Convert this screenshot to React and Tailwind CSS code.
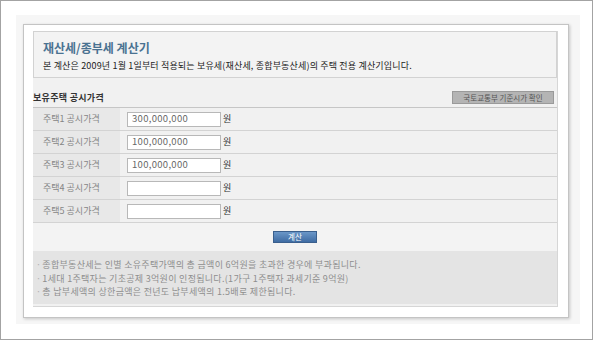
import React from 'react';

const font = { fontFamily: '"Noto Sans CJK KR", "Noto Sans", sans-serif' };

const rows = [
    { label: '주택1 공시가격', value: '300,000,000' },
    { label: '주택2 공시가격', value: '100,000,000' },
    { label: '주택3 공시가격', value: '100,000,000' },
    { label: '주택4 공시가격', value: '' },
    { label: '주택5 공시가격', value: '' },
];

const notes = [
    '종합부동산세는 인별 소유주택가액의 총 금액이 6억원을 초과한 경우에 부과됩니다.',
    '1세대 1주택자는 기초공제 3억원이 인정됩니다.(1가구 1주택자 과세기준 9억원)',
    '총 납부세액의 상한금액은 전년도 납부세액의 1.5배로 제한됩니다.',
];

function PriceRow({ label, value }) {
    return (
        <div className="flex h-[23px] border-b border-[#d3d3d3]">
            <div className="w-[87px] bg-[#e8e8e8] pl-[10px] flex items-center text-[9px] text-[#858585]">
                {label}
            </div>
            <div className="flex-1 flex items-center pl-[7px]">
                <div className="w-[94px] h-[15px] border border-[#b8b8b8] bg-white pl-[4px] flex items-center text-[9.5px] tracking-[0.3px] text-[#666] leading-none">
                    {value}
                </div>
                <span className="ml-[2px] text-[9px] text-[#333]">원</span>
            </div>
        </div>
    );
}

export default function App() {
    return (
        <div style={font} className="w-[593px] h-[340px] border border-[#a3a3a3] bg-white pl-[15px] pt-[14px]">
            <div className="w-[564px] h-[309px] bg-[#f6f6f6] pl-[7px] pt-[9px]">
                <div className="w-[546px] h-[294px] border border-[#c4c4c4] bg-white shadow-[1px_1px_3px_rgba(0,0,0,0.2)] pl-[9px] pt-[6px]">
                    <div className="w-[525px] h-[276px] bg-[#f1f1f1] border-r border-b border-[#d6d6d6] flex flex-col">
                        {/* header */}
                        <div className="h-[47px] border border-[#d2d2d2] bg-[#f3f3f3] pl-[9px] pt-[8px]">
                            <div className="text-[12px] leading-[16px] font-bold text-[#4a7291]">재산세/종부세 계산기</div>
                            <div className="mt-[3px] text-[9px] leading-[14px] tracking-[0.17px] text-[#222]">
                                본 계산은 2009년 1월 1일부터 적용되는 보유세(재산세, 종합부동산세)의 주택 전용 계산기입니다.
                            </div>
                        </div>

                        {/* section heading */}
                        <div className="h-[29px] pt-[10px] flex items-center justify-between pr-[3px]">
                            <span className="text-[9px] font-bold tracking-[0.3px] text-[#333]">보유주택 공시가격</span>
                            <button className="h-[13px] w-[102px] bg-[#b4b4b4] border border-[#9a9a9a] text-[7.5px] leading-none text-[#555] flex items-center justify-center">
                                국토교통부 기준시가 확인
                            </button>
                        </div>

                        {/* table */}
                        <div className="border-t border-[#c6c6c6]">
                            {rows.map((r) => (
                                <PriceRow key={r.label} {...r} />
                            ))}
                        </div>

                        {/* calculate button */}
                        <div className="h-[28px] bg-[#f3f3f3] flex items-center justify-center">
                            <button className="w-[44px] h-[12px] bg-gradient-to-b from-[#6b97c8] to-[#3f6ca3] border border-[#3a5f8d] text-white text-[7.5px] leading-none flex items-center justify-center">
                                계산
                            </button>
                        </div>

                        {/* notes */}
                        <div className="h-[53px] bg-[#e4e4e4] pl-[3px] pt-[7px]">
                            {notes.map((n) => (
                                <div key={n} className="text-[9px] leading-[13.5px] tracking-[0.3px] text-[#8e8e8e] whitespace-nowrap">
                                    <span className="text-[#b0b0b0] mr-[1px]">·</span>
                                    {n}
                                </div>
                            ))}
                        </div>
                    </div>
                </div>
            </div>
        </div>
    );
}
